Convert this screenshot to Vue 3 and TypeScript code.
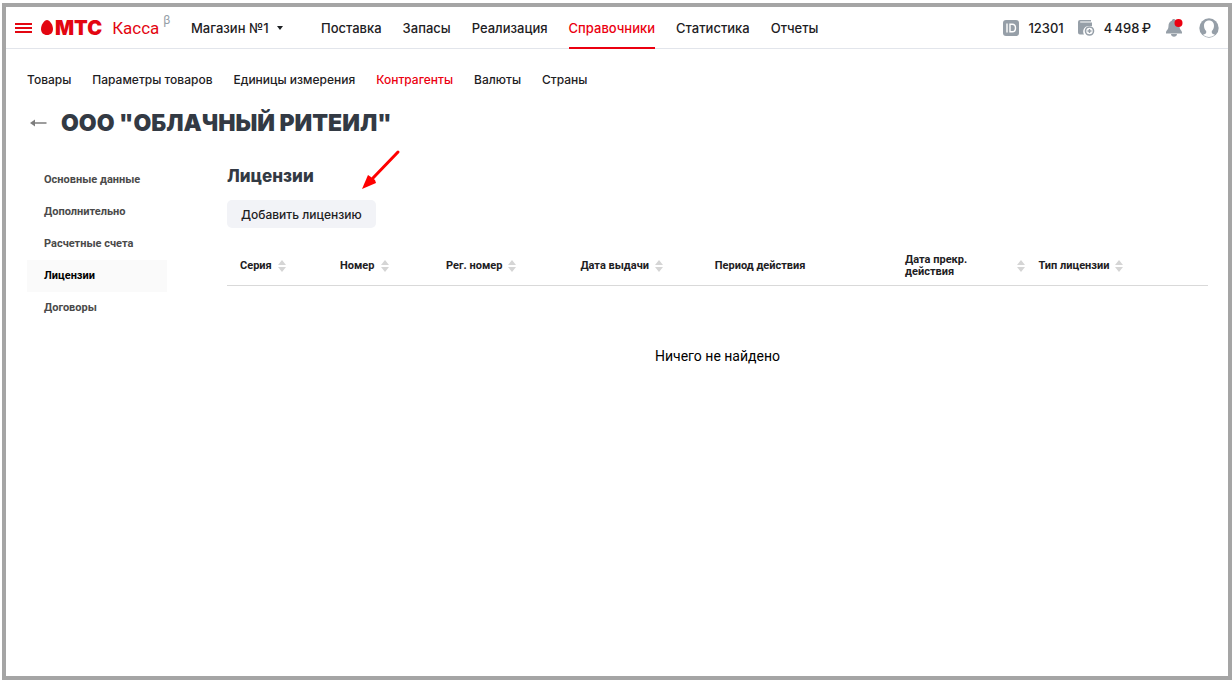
<script setup lang="ts">
import { ref } from 'vue'

interface Column {
  label: string
  sortable: boolean
  width: string
  spread?: boolean
}

const mainNav = ['Поставка', 'Запасы', 'Реализация', 'Справочники', 'Статистика', 'Отчеты']
const subNav = ['Товары', 'Параметры товаров', 'Единицы измерения', 'Контрагенты', 'Валюты', 'Страны']
const sections = ['Основные данные', 'Дополнительно', 'Расчетные счета', 'Лицензии', 'Договоры']

const columns: Column[] = [
  { label: 'Серия', sortable: true, width: '10.2%' },
  { label: 'Номер', sortable: true, width: '10.8%' },
  { label: 'Рег. номер', sortable: true, width: '13.7%' },
  { label: 'Дата выдачи', sortable: true, width: '13.7%' },
  { label: 'Период действия', sortable: false, width: '19.4%' },
  { label: 'Дата прекр. действия', sortable: true, width: '13.6%', spread: true },
  { label: 'Тип лицензии', sortable: true, width: '18.6%' },
]

const activeMain = ref('Справочники')
const activeSub = ref('Контрагенты')
const activeSection = ref('Лицензии')
</script>

<template>
  <div class="shell">
    <div class="frame">
      <header class="topbar">
        <button class="icon-btn" type="button" aria-label="Меню">
          <svg width="17" height="12" viewBox="0 0 17 12"><path d="M0 2h17M0 6h17M0 10h17" stroke="#e30611" stroke-width="2" /></svg>
        </button>
        <a class="logo" href="#">
          <svg width="12" height="15" viewBox="0 0 12 15"><path d="M6 0C8.600 0 12 4.700 12 9c0 3.700-2.400 6-6 6s-6-2.300-6-6C0 4.700 3.400 0 6 0z" fill="#e30611" /></svg>
          <span class="logo-brand">МТС</span>
          <span class="logo-name">Касса</span>
          <span class="logo-beta">β</span>
        </a>
        <button class="store" type="button">
          <span>Магазин №1</span>
          <svg width="6" height="4" viewBox="0 0 6 4"><path d="M0 0h6L3 4z" fill="#1d2023" /></svg>
        </button>
        <nav class="main-nav">
          <a v-for="item in mainNav" :key="item" href="#" :class="{ active: item === activeMain }" @click.prevent="activeMain = item">{{ item }}</a>
        </nav>
        <div class="account">
          <svg width="16" height="16" viewBox="0 0 16 16">
            <rect width="16" height="16" rx="3" fill="#969fa8" />
            <path d="M4 3.500v9M7 4.200h2.300c2 0 3.200 1.400 3.200 3.800s-1.200 3.800-3.200 3.800H7z" fill="none" stroke="#fff" stroke-width="1.400" />
          </svg>
          <span class="ident">12301</span>
          <svg width="17" height="16" viewBox="0 0 17 16">
            <path d="M2 0h11v1.600H2.200v1H14V6H10.500A5.600 5.600 0 0 0 6 14.500H2A2 2 0 0 1 0 12.500V2a2 2 0 0 1 2-2z" fill="#969fa8" />
            <circle cx="11.500" cy="11" r="4" fill="#fff" stroke="#969fa8" stroke-width="1.600" />
            <path d="M9.500 11h4M11.500 9v4" stroke="#969fa8" stroke-width="1.400" />
          </svg>
          <span class="balance">4&#8201;498&#8201;₽</span>
          <button class="icon-btn bell" type="button" aria-label="Уведомления">
            <svg width="18" height="19" viewBox="0 0 18 19">
              <path d="M6 2.500c0-2 3.500-2 3.500 0C12.500 3.500 13.500 5.500 13.500 8c0 4 2.500 4.500 2.500 6.500v1H0v-1C0 12.500 2.500 12 2.500 8c0-2.500 1-4.500 3.500-5.500zM5 16h6c0 3.500-6 3.500-6 0z" fill="#969fa8" />
              <circle cx="12.500" cy="5" r="4" fill="#eb0010" />
            </svg>
          </button>
          <button class="icon-btn" type="button" aria-label="Профиль">
            <svg width="20" height="20" viewBox="0 0 20 20">
              <circle cx="10" cy="10" r="9.700" fill="#969fa8" />
              <path d="M10 2.500c3.200 0 5 2.200 5 5.200 0 2.200-.8 4-2.200 5.200v1.500c0 1.200 1.200 1.600 3.200 2.300A9 9 0 0 1 10 19a9 9 0 0 1-6-2.300c2-.7 3.200-1.100 3.200-2.300v-1.500C5.800 11.700 5 9.900 5 7.700c0-3 1.800-5.200 5-5.200z" fill="#fff" />
            </svg>
          </button>
        </div>
      </header>

      <nav class="sub-nav">
        <a v-for="item in subNav" :key="item" href="#" :class="{ active: item === activeSub }" @click.prevent="activeSub = item">{{ item }}</a>
      </nav>

      <div class="heading">
        <button class="icon-btn" type="button" aria-label="Назад">
          <svg width="17" height="8" viewBox="0 0 17 8"><path d="M4 4h12.500" stroke="#7d7d7d" stroke-width="1.500" /><path d="M0 4l5-3.500v7z" fill="#7d7d7d" /></svg>
        </button>
        <h1>ООО "ОБЛАЧНЫЙ РИТЕИЛ"</h1>
      </div>

      <div class="body">
        <aside class="sections">
          <a v-for="item in sections" :key="item" href="#" :class="{ active: item === activeSection }" @click.prevent="activeSection = item">{{ item }}</a>
        </aside>
        <main class="content">
          <h2>Лицензии</h2>
          <svg class="pointer" width="40" height="42" viewBox="0 0 40 42">
            <path d="M37 3L12 29" stroke="#f00" stroke-width="3" stroke-linecap="round" />
            <path d="M1 40L7 26L10 28L14 31L15 34z" fill="#f00" />
          </svg>
          <button class="add" type="button">Добавить лицензию</button>
          <table>
            <colgroup>
              <col v-for="col in columns" :key="col.label" :style="{ width: col.width }" />
            </colgroup>
            <thead>
              <tr>
                <th v-for="col in columns" :key="col.label" scope="col">
                  <div class="cell" :class="{ spread: col.spread }">
                    <span>{{ col.label }}</span>
                    <svg v-if="col.sortable" width="8" height="12" viewBox="0 0 8 12"><path d="M0 5l4-5 4 5zM0 7h8l-4 5z" fill="#d5d5d5" /></svg>
                  </div>
                </th>
              </tr>
            </thead>
            <tbody>
              <tr>
                <td :colspan="columns.length">Ничего не найдено</td>
              </tr>
            </tbody>
          </table>
        </main>
      </div>
    </div>
  </div>
</template>

<style>
body {
  background: #fff;
}
</style>

<style scoped>
.shell {
  box-sizing: border-box;
  min-height: 100vh;
  padding: 3px 0 0 2px;
  display: flex;
  font-family: Inter, Roboto, sans-serif;
  color: #1d2023;
}
.frame {
  flex: 1;
  min-width: 0;
  border: 4px solid #a5a5a5;
}
a {
  color: inherit;
  text-decoration: none;
}
svg {
  display: block;
  flex: none;
}
button {
  font: inherit;
  color: inherit;
  border: 0;
  padding: 0;
  background: none;
  cursor: pointer;
}
.topbar {
  display: flex;
  align-items: center;
  height: 41px;
  padding: 0 9px;
  border-bottom: 1px solid #e2e5eb;
  font-size: 13px;
  font-weight: 500;
}
.logo {
  display: flex;
  align-items: center;
  margin-left: 9px;
  width: 150px;
  color: #e30611;
}
.logo-brand {
  margin-left: 2px;
  font-size: 20px;
  line-height: 24px;
  font-weight: 900;
}
.logo-name {
  margin-left: 10px;
  font-family: Roboto, sans-serif;
  font-size: 17px;
  font-weight: 400;
}
.logo-beta {
  margin: 0 0 16px 4px;
  font-family: Roboto, sans-serif;
  font-size: 12px;
  font-weight: 400;
  color: #969fa8;
}
.store {
  display: flex;
  align-items: center;
  gap: 8px;
  width: 130px;
}
.main-nav {
  display: flex;
  align-self: stretch;
  gap: 21px;
}
.main-nav a {
  display: flex;
  align-items: center;
  height: 42px;
  box-sizing: border-box;
  border-top: 1px solid transparent;
  border-bottom: 2px solid transparent;
}
.main-nav a.active {
  color: #eb0010;
  border-bottom-color: #eb0010;
}
.account {
  display: flex;
  align-items: center;
  margin-left: auto;
}
.ident {
  margin: 0 14px 0 9px;
}
.balance {
  margin-left: 9px;
}
.bell {
  margin: 0 15px;
}
.sub-nav {
  display: flex;
  gap: 21px;
  padding: 23px 21px 0;
  font-size: 12px;
  line-height: 16px;
  font-weight: 500;
}
.sub-nav a.active {
  color: #eb0010;
}
.heading {
  display: flex;
  align-items: center;
  gap: 14px;
  padding: 19px 24px 0;
}
h1 {
  margin: 0;
  font-size: 23px;
  line-height: 32px;
  font-weight: 900;
  color: #333a44;
}
.body {
  display: flex;
  gap: 60px;
  padding: 25px 20px 0 21px;
}
.sections {
  display: flex;
  flex-direction: column;
  width: 140px;
  flex: none;
}
.sections a {
  padding-left: 17px;
  font-family: Roboto, sans-serif;
  font-size: 11px;
  line-height: 32px;
  font-weight: 700;
  color: #4a4a4a;
}
.sections a.active {
  color: #000;
  background: #fafafa;
}
.content {
  position: relative;
  flex: 1;
  min-width: 0;
}
h2 {
  margin: 0;
  font-size: 17px;
  line-height: 24px;
  font-weight: 800;
  color: #333a44;
}
.pointer {
  position: absolute;
  left: 134px;
  top: -15px;
}
.add {
  display: block;
  margin-top: 12px;
  padding: 0 14px;
  height: 28px;
  border-radius: 5px;
  background: #f2f3f7;
  font-size: 12px;
  font-weight: 500;
}
table {
  width: 100%;
  margin-top: 18px;
  table-layout: fixed;
  border-collapse: collapse;
}
th {
  height: 39px;
  padding: 0 0 0 13px;
  border-bottom: 1px solid #d9d9d9;
  text-align: left;
  font-family: Roboto, sans-serif;
  font-size: 11px;
  line-height: 12px;
  font-weight: 700;
}
.cell {
  display: flex;
  align-items: center;
  gap: 6px;
}
.cell.spread {
  justify-content: space-between;
}
.spread span {
  width: 72px;
}
td {
  padding: 60px 0 0;
  text-align: center;
  font-family: Roboto, sans-serif;
  font-size: 14px;
  line-height: 20px;
  color: #000;
}
</style>
